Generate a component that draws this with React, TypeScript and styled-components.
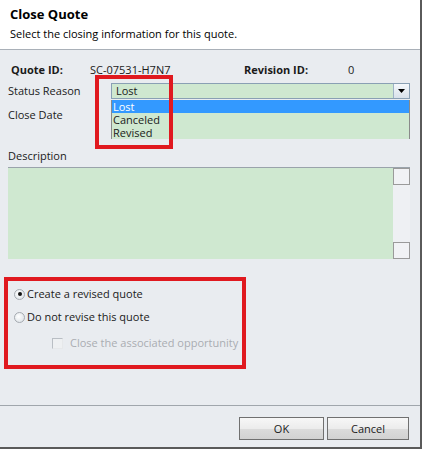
import React from "react";
import styled, { createGlobalStyle } from "styled-components";

const Global = createGlobalStyle`
  html, body { margin: 0; padding: 0; background: #ffffff; }
  body { font-family: "Open Sans", "Noto Sans", Arial, sans-serif; font-size: 11px; color: #1a1a1a; }
`;

const Dialog = styled.div`
  position: relative;
  width: 420px;
  height: 447px;
  display: flex;
  flex-direction: column;
  background: #e9ecf0;
  border-right: 2px solid #5a5a5a;
  border-bottom: 2px solid #5a5a5a;
`;

const Header = styled.div`
  height: 50px;
  box-sizing: border-box;
  background: #ffffff;
  border-bottom: 1px solid #a9b0b8;
  padding: 5px 10px 0 10px;
`;

const Title = styled.div`
  font-size: 13px;
  font-weight: 700;
  line-height: 18px;
  color: #000;
`;

const Subtitle = styled.div`
  font-size: 11px;
  line-height: 16px;
  margin-top: 3px;
  color: #000;
`;

const Body = styled.div`
  position: relative;
  flex: 1;
  padding: 12px 10px 0 8px;
  display: flex;
  flex-direction: column;
`;

const InfoRow = styled.div`
  display: grid;
  grid-template-columns: 79px 154px 104px 1fr;
  height: 16px;
  line-height: 16px;
  padding-left: 3px;
`;

const InfoLabel = styled.span`
  font-weight: 700;
`;

const FieldRow = styled.div<{ $top: number }>`
  display: grid;
  grid-template-columns: 103px 1fr;
  height: 16px;
  line-height: 16px;
  margin-top: ${(p) => p.$top}px;
  position: relative;
`;

const Select = styled.div`
  position: relative;
  display: flex;
  height: 16px;
  box-sizing: border-box;
  border: 1px solid #8aa0b4;
  background: #cfe8d0;
`;

const SelectText = styled.span`
  flex: 1;
  padding-left: 4px;
  line-height: 14px;
`;

const SelectButton = styled.span`
  width: 15px;
  border-left: 1px solid #9fb3c6;
  background: linear-gradient(#f5f8fb, #d8e1ea);
  display: flex;
  align-items: center;
  justify-content: center;
`;

const ListBox = styled.div`
  position: absolute;
  left: -1px;
  right: -1px;
  top: 16px;
  border-left: 1px solid #8a8a8a;
  border-right: 1px solid #8a8a8a;
  background: #cfe8d0;
  z-index: 2;
`;

const ListItem = styled.div<{ $active?: boolean }>`
  height: 13px;
  line-height: 13px;
  padding-left: 1px;
  background: ${(p) => (p.$active ? "#3399ff" : "transparent")};
  color: ${(p) => (p.$active ? "#ffffff" : "#1a1a1a")};
`;

const Label = styled.span``;

const DescLabel = styled.div`
  margin-top: 25px;
  height: 16px;
  line-height: 16px;
`;

const TextArea = styled.div`
  margin-top: 3px;
  height: 92px;
  display: flex;
  border-top: 1px solid #9aa3ab;
  box-sizing: border-box;
`;

const TextFill = styled.div`
  flex: 1;
  background: #cfe8d0;
`;

const ScrollBar = styled.div`
  width: 17px;
  background: #eef0f3;
  display: flex;
  flex-direction: column;
  justify-content: space-between;
`;

const ScrollBtn = styled.div`
  height: 17px;
  box-sizing: border-box;
  border: 1px solid #9a9a9a;
  background: #f1f2f5;
`;

const Options = styled.div`
  margin-top: 27px;
  display: flex;
  flex-direction: column;
  gap: 7px;
  padding-left: 6px;
`;

const OptionRow = styled.div<{ $indent?: number; $disabled?: boolean }>`
  display: flex;
  align-items: center;
  gap: 2px;
  height: 16px;
  line-height: 16px;
  padding-left: ${(p) => p.$indent ?? 0}px;
  color: ${(p) => (p.$disabled ? "#a9adb2" : "#1a1a1a")};
  margin-top: ${(p) => (p.$disabled ? 3 : 0)}px;
`;

const Radio = styled.span<{ $checked?: boolean }>`
  width: 11px;
  height: 11px;
  border-radius: 50%;
  box-sizing: border-box;
  border: 1px solid #a5aab0;
  background: radial-gradient(circle at 40% 40%, #ffffff, #d6dde3);
  display: flex;
  align-items: center;
  justify-content: center;
  &::after {
    content: "";
    width: 4px;
    height: 4px;
    border-radius: 50%;
    background: ${(p) => (p.$checked ? "#111" : "transparent")};
  }
`;

const CheckBox = styled.span`
  width: 11px;
  height: 11px;
  box-sizing: border-box;
  border: 1px solid #b9bec4;
  border-right-color: #e6e8ea;
  border-bottom-color: #e6e8ea;
  background: #eef0f2;
  margin-right: 5px;
`;

const Footer = styled.div`
  margin-top: auto;
  height: 42px;
  box-sizing: border-box;
  border-top: 1px solid #a0a6ac;
  display: flex;
  justify-content: flex-end;
  align-items: flex-start;
  gap: 3px;
  padding: 11px 11px 0 0;
`;

const Button = styled.button<{ $w: number }>`
  width: ${(p) => p.$w}px;
  height: 23px;
  box-sizing: border-box;
  border: 1px solid #707070;
  background: linear-gradient(#f7f7f7 0%, #ececec 50%, #dcdcdc 51%, #d2d2d2 100%);
  font-family: "Open Sans", "Noto Sans", Arial, sans-serif;
  font-size: 11px;
  color: #1a1a1a;
  padding: 0;
`;

const Annotation = styled.div<{ $l: number; $t: number; $w: number; $h: number }>`
  position: absolute;
  left: ${(p) => p.$l}px;
  top: ${(p) => p.$t}px;
  width: ${(p) => p.$w}px;
  height: ${(p) => p.$h}px;
  box-sizing: border-box;
  border: 4px solid #e0191f;
  z-index: 5;
  pointer-events: none;
`;

export default function App() {
  return (
    <>
      <Global />
      <Dialog>
        <Header>
          <Title>Close Quote</Title>
          <Subtitle>Select the closing information for this quote.</Subtitle>
        </Header>
        <Body>
          <InfoRow>
            <InfoLabel>Quote ID:</InfoLabel>
            <span>SC-07531-H7N7</span>
            <InfoLabel>Revision ID:</InfoLabel>
            <span>0</span>
          </InfoRow>
          <FieldRow $top={5}>
            <Label>Status Reason</Label>
            <Select>
              <SelectText>Lost</SelectText>
              <SelectButton>
                <svg width="7" height="4" viewBox="0 0 7 4">
                  <path d="M0 0 H7 L3.5 4 Z" fill="#000" />
                </svg>
              </SelectButton>
              <ListBox>
                <ListItem $active>Lost</ListItem>
                <ListItem>Canceled</ListItem>
                <ListItem>Revised</ListItem>
              </ListBox>
            </Select>
          </FieldRow>
          <FieldRow $top={8}>
            <Label>Close Date</Label>
            <span />
          </FieldRow>
          <DescLabel>Description</DescLabel>
          <TextArea>
            <TextFill />
            <ScrollBar>
              <ScrollBtn />
              <ScrollBtn />
            </ScrollBar>
          </TextArea>
          <Options>
            <OptionRow>
              <Radio $checked />
              <span>Create a revised quote</span>
            </OptionRow>
            <OptionRow>
              <Radio />
              <span>Do not revise this quote</span>
            </OptionRow>
            <OptionRow $indent={38} $disabled>
              <CheckBox />
              <span>Close the associated opportunity</span>
            </OptionRow>
          </Options>
        </Body>
        <Footer>
          <Button $w={85}>OK</Button>
          <Button $w={82}>Cancel</Button>
        </Footer>
        <Annotation $l={95} $t={75} $w={78} $h={74} />
        <Annotation $l={4} $t={277} $w={242} $h={92} />
      </Dialog>
    </>
  );
}
